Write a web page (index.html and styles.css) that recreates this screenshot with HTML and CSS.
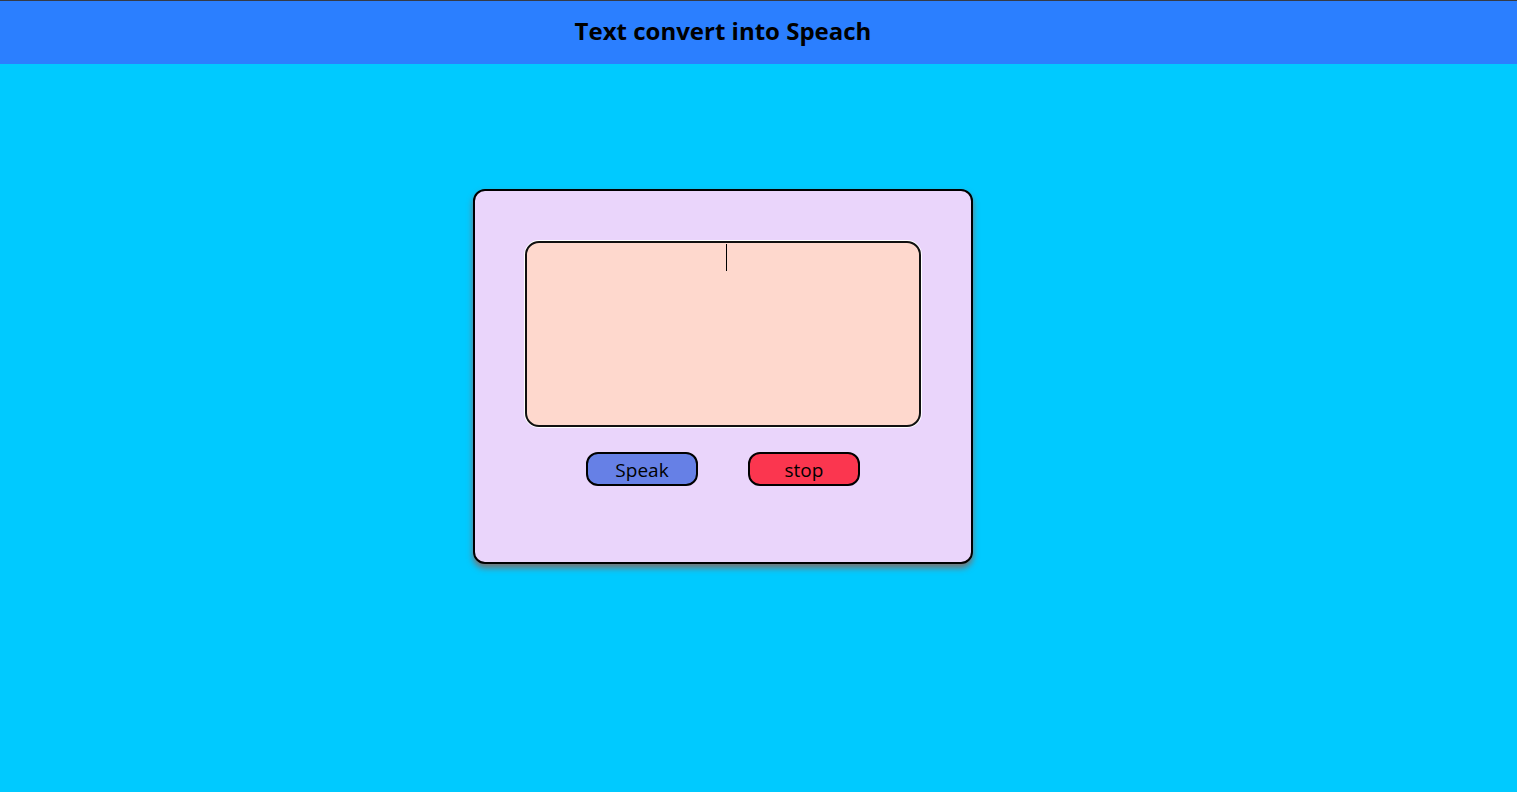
FILE: index.html
```html
<!DOCTYPE html>
<html lang="en">
<head>
<meta charset="utf-8">
<title>Text convert into Speach</title>
<link rel="stylesheet" href="styles.css">
</head>
<body>
<header class="header">
  <h1 class="title">Text convert into Speach</h1>
</header>
<main class="main">
  <section class="card">
    <div class="field">
      <textarea class="text-input" aria-label="Text to speak"></textarea>
      <span class="caret" aria-hidden="true"></span>
    </div>
    <div class="actions">
      <button class="button button-speak" type="button">Speak</button>
      <button class="button button-stop" type="button">stop</button>
    </div>
  </section>
</main>
</body>
</html>
```
FILE: styles.css
```css
* {
  box-sizing: border-box;
}

body {
  margin: 0;
  min-height: 100vh;
  background: #00caff;
  color: #000;
  font-family: "Segoe UI", "Open Sans", "Noto Sans", sans-serif;
}

.header {
  padding: 14px 71px 17px 0;
  border-top: 1px solid #353b47;
  background: #2b7fff;
  text-align: center;
}

.title {
  margin: 0;
  font-size: 24px;
  font-weight: 700;
  line-height: 32px;
}

.main {
  display: flex;
  justify-content: center;
  padding: 125px 71px 0 0;
}

.card {
  width: 500px;
  padding: 50px 50px 76px;
  border: 2px solid #000;
  border-radius: 12px;
  background: #ead5fb;
  box-shadow: 0 4px 6px #7b7070;
}

.field {
  position: relative;
}

.text-input {
  display: block;
  width: 100%;
  height: 186px;
  padding: 0;
  border: 2px solid #101010;
  border-radius: 14px;
  outline: none;
  box-shadow: 0 0 0 1px #fff;
  background: #fed8cd;
  font: inherit;
  font-size: 20px;
  text-align: center;
  resize: none;
}

.caret {
  position: absolute;
  top: 3px;
  left: 201px;
  width: 1px;
  height: 27px;
  background: #000;
}

.actions {
  display: flex;
  justify-content: center;
  gap: 50px;
  margin-top: 25px;
}

.button {
  width: 112px;
  height: 34px;
  padding: 2px 0 0;
  border: 2px solid #000;
  border-radius: 12px;
  color: #000;
  font: inherit;
  font-size: 19px;
  line-height: 28px;
}

.button-speak {
  background: #6680e6;
}

.button-stop {
  background: #fb364f;
}
```
